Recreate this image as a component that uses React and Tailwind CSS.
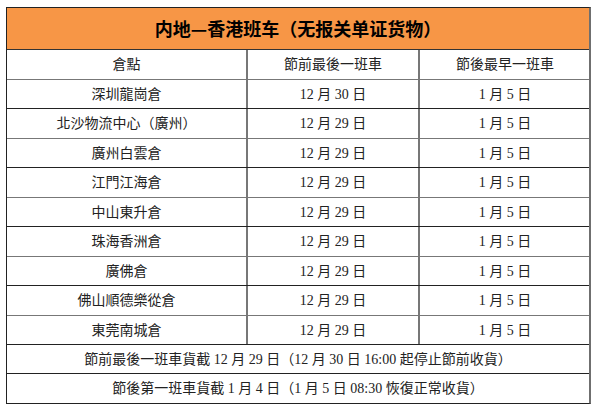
import React from 'react'

const rows = [
	['深圳龍崗倉', '12 月 30 日', '1 月 5 日'],
	['北沙物流中心（廣州）', '12 月 29 日', '1 月 5 日'],
	['廣州白雲倉', '12 月 29 日', '1 月 5 日'],
	['江門江海倉', '12 月 29 日', '1 月 5 日'],
	['中山東升倉', '12 月 29 日', '1 月 5 日'],
	['珠海香洲倉', '12 月 29 日', '1 月 5 日'],
	['廣佛倉', '12 月 29 日', '1 月 5 日'],
	['佛山順德樂從倉', '12 月 29 日', '1 月 5 日'],
	['東莞南城倉', '12 月 29 日', '1 月 5 日'],
]

const cellFont = { fontFamily: '"Liberation Serif", "Noto Sans CJK TC", serif' }

export default function App() {
	return (
		<div className="w-[600px] h-[412px] bg-white pl-[6px] pt-[7px]">
			<div className="w-[585px] border-l border-t border-b border-[#222] border-r-2 border-r-[#6f6f6f] text-[14px] text-[#222]" style={cellFont}>
				<div
					className="h-[42px] bg-[#f79646] border-b border-[#333] flex items-center justify-center text-[18px] font-bold text-black"
					style={{ fontFamily: '"Noto Sans CJK SC", sans-serif' }}
				>
					内地—香港班车（无报关单证货物）
				</div>

				<div className="grid grid-cols-[241px_172px_170px] h-[30px] border-b border-[#777]">
					<div className="flex items-center justify-center border-r-2 border-[#777]">倉點</div>
					<div className="flex items-center justify-center border-r-2 border-[#777]">節前最後一班車</div>
					<div className="flex items-center justify-center">節後最早一班車</div>
				</div>

				{rows.map((r, i) => (
					<div
						key={r[0]}
						className={`grid grid-cols-[241px_172px_170px] border-b ${i % 2 === 0 ? 'h-[29px] border-[#222]' : 'h-[30px] border-[#777]'}`}
					>
						<div className="flex items-center justify-center border-r-2 border-[#777]">{r[0]}</div>
						<div className="flex items-center justify-center border-r-2 border-[#777]">{r[1]}</div>
						<div className="flex items-center justify-center">{r[2]}</div>
					</div>
				))}

				<div className="h-[29px] flex items-center justify-center border-b border-[#222]">
					節前最後一班車貨截 12 月 29 日（12 月 30 日 16:00 起停止節前收貨）
				</div>
				<div className="h-[29px] flex items-center justify-center">
					節後第一班車貨截 1 月 4 日（1 月 5 日 08:30 恢復正常收貨）
				</div>
			</div>
		</div>
	)
}
